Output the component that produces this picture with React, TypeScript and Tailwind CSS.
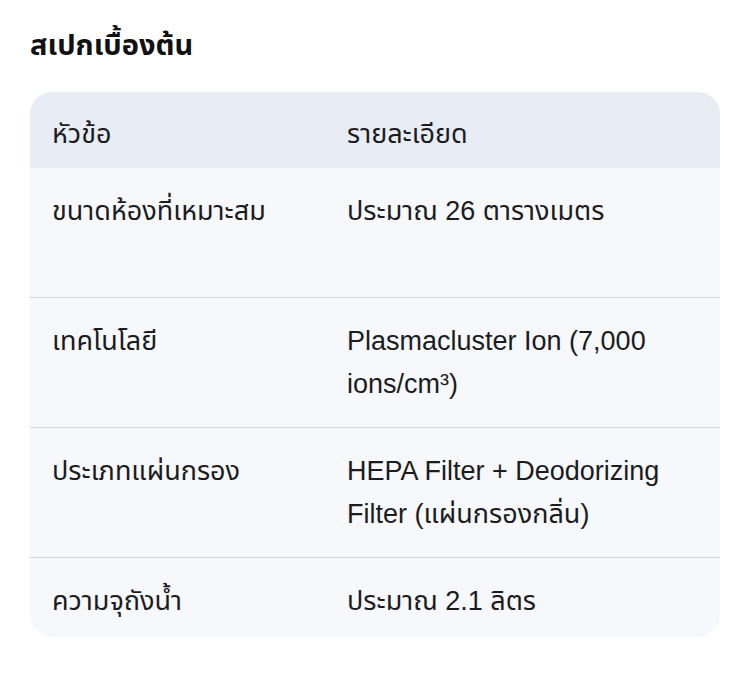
const rows = [
  { label: "ขนาดห้องที่เหมาะสม", value: "ประมาณ 26 ตารางเมตร", h: "h-[129px]" },
  { label: "เทคโนโลยี", value: "Plasmacluster Ion (7,000 ions/cm³)", h: "h-[130px]" },
  { label: "ประเภทแผ่นกรอง", value: "HEPA Filter + Deodorizing Filter (แผ่นกรองกลิ่น)", h: "h-[130px]" },
  { label: "ความจุถังน้ำ", value: "ประมาณ 2.1 ลิตร", h: "h-[80px]" },
]

export default function App() {
  return (
    <div
      className="min-h-[675px] w-[750px] bg-white px-[30px] pt-[22px] text-[#1c1c1e]"
      style={{ fontFamily: '"Liberation Sans", "Noto Sans Thai", "Noto Sans", sans-serif' }}
    >
      <h2 className="text-[29px] font-bold leading-[46px] text-[#111]">สเปกเบื้องต้น</h2>

      <div className="mt-[24px] overflow-hidden rounded-[22px] bg-[#f7f8fc] text-[27px] leading-[43px]">
        <div className="grid h-[76px] grid-cols-[295px_1fr] bg-[#e8edf5] px-[22px] pt-[21px]">
          <div>หัวข้อ</div>
          <div>รายละเอียด</div>
        </div>
        {rows.map((r, i) => (
          <div
            key={r.label}
            className={`grid grid-cols-[295px_1fr] px-[22px] pt-[22px] ${r.h} ${i > 0 ? "border-t border-[#d4d6da]" : ""}`}
          >
            <div>{r.label}</div>
            <div className="pr-[10px]">{r.value}</div>
          </div>
        ))}
      </div>
    </div>
  )
}
